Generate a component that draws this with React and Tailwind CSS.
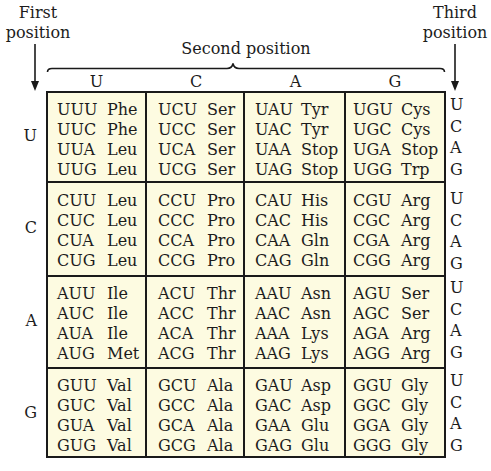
const BASES = ['U', 'C', 'A', 'G']

const AMINO = {
  U: [['Phe', 'Phe', 'Leu', 'Leu'], ['Ser', 'Ser', 'Ser', 'Ser'], ['Tyr', 'Tyr', 'Stop', 'Stop'], ['Cys', 'Cys', 'Stop', 'Trp']],
  C: [['Leu', 'Leu', 'Leu', 'Leu'], ['Pro', 'Pro', 'Pro', 'Pro'], ['His', 'His', 'Gln', 'Gln'], ['Arg', 'Arg', 'Arg', 'Arg']],
  A: [['Ile', 'Ile', 'Ile', 'Met'], ['Thr', 'Thr', 'Thr', 'Thr'], ['Asn', 'Asn', 'Lys', 'Lys'], ['Ser', 'Ser', 'Arg', 'Arg']],
  G: [['Val', 'Val', 'Val', 'Val'], ['Ala', 'Ala', 'Ala', 'Ala'], ['Asp', 'Asp', 'Glu', 'Glu'], ['Gly', 'Gly', 'Gly', 'Gly']],
}

// per-row geometry taken from the reference
const ROWS = [
  { h: 'h-[90px]', pt: 'pt-[7px]', letters: 'pt-[3px]' },
  { h: 'h-[94px]', pt: 'pt-[8px]', letters: 'pt-[7px]' },
  { h: 'h-[92px]', pt: 'pt-[7px]', letters: 'pt-[2px]' },
  { h: 'h-[91px]', pt: 'pt-[7px]', letters: 'pt-[3px]' },
]

// codon indent / codon column width for each second-position column
const COLS = [
  { pl: 'pl-[9px]', w: 'w-[50px]' },
  { pl: 'pl-[11px]', w: 'w-[49px]' },
  { pl: 'pl-[10px]', w: 'w-[46px]' },
  { pl: 'pl-[7px]', w: 'w-[48px]' },
]

function DownArrow({ className }) {
  return (
    <svg width="10" height="48" viewBox="0 0 10 48" className={className}>
      <line x1="5" y1="1" x2="5" y2="40" stroke="#1a1a1a" strokeWidth="1.6" />
      <polygon points="1,38 9,38 5,48" fill="#1a1a1a" />
    </svg>
  )
}

function Brace() {
  return (
    <svg width="400" height="14" viewBox="0 0 400 14" className="block">
      <path
        d="M1.5 13 Q1.5 9.5 6 9.5 L181 9.5 Q186 9.5 187 4.5 Q188 9.5 193 9.5 L394 9.5 Q398.5 9.5 398.5 13"
        fill="none"
        stroke="#1a1a1a"
        strokeWidth="1.6"
      />
    </svg>
  )
}

export default function App() {
  return (
    <div className="w-[491px] h-[471px] bg-white text-[#1c1c1c] font-['DejaVu_Serif',serif] text-[16px] overflow-hidden">
      {/* header */}
      <div className="flex h-[91px]">
        <div className="w-[46px] flex flex-col">
          <div className="w-[76px] pt-[3px] text-center leading-[20px]">
            First
            <br />
            position
          </div>
          <DownArrow className="ml-[30px]" />
        </div>

        <div className="w-[400px] flex flex-col">
          <div className="mt-[39px] text-center leading-[20px]">Second position</div>
          <Brace />
          <div className="grid grid-cols-[101px_98px_101px_98px] leading-[18px] text-center">
            {BASES.map((b) => (
              <span key={b}>{b}</span>
            ))}
          </div>
        </div>

        <div className="flex-1 flex flex-col">
          <div className="w-[66px] -ml-[24px] pt-[3px] text-center leading-[20px]">
            Third
            <br />
            position
          </div>
          <DownArrow className="ml-[4px]" />
        </div>
      </div>

      {/* body */}
      {BASES.map((first, r) => (
        <div key={first} className={`flex ${ROWS[r].h}`}>
          <div className="w-[46px] flex items-center justify-end pr-[9px]">{first}</div>

          <div
            className={`w-[400px] grid grid-cols-[99px_98px_101px_98px] divide-x-2 divide-[#1a1a1a] border-x-2 border-t-2 border-[#1a1a1a] bg-[#fdfbe1] ${
              r === 3 ? 'border-b-2' : ''
            }`}
          >
            {BASES.map((second, c) => (
              <div key={second} className={`flex flex-col leading-[20px] ${ROWS[r].pt} ${COLS[c].pl}`}>
                {BASES.map((third, k) => (
                  <div key={third} className="flex whitespace-nowrap">
                    <span className={COLS[c].w}>{first + second + third}</span>
                    <span>{AMINO[first][c][k]}</span>
                  </div>
                ))}
              </div>
            ))}
          </div>

          <div className={`flex-1 flex flex-col pl-[4px] leading-[21.5px] ${ROWS[r].letters}`}>
            {BASES.map((b) => (
              <span key={b}>{b}</span>
            ))}
          </div>
        </div>
      ))}
    </div>
  )
}
